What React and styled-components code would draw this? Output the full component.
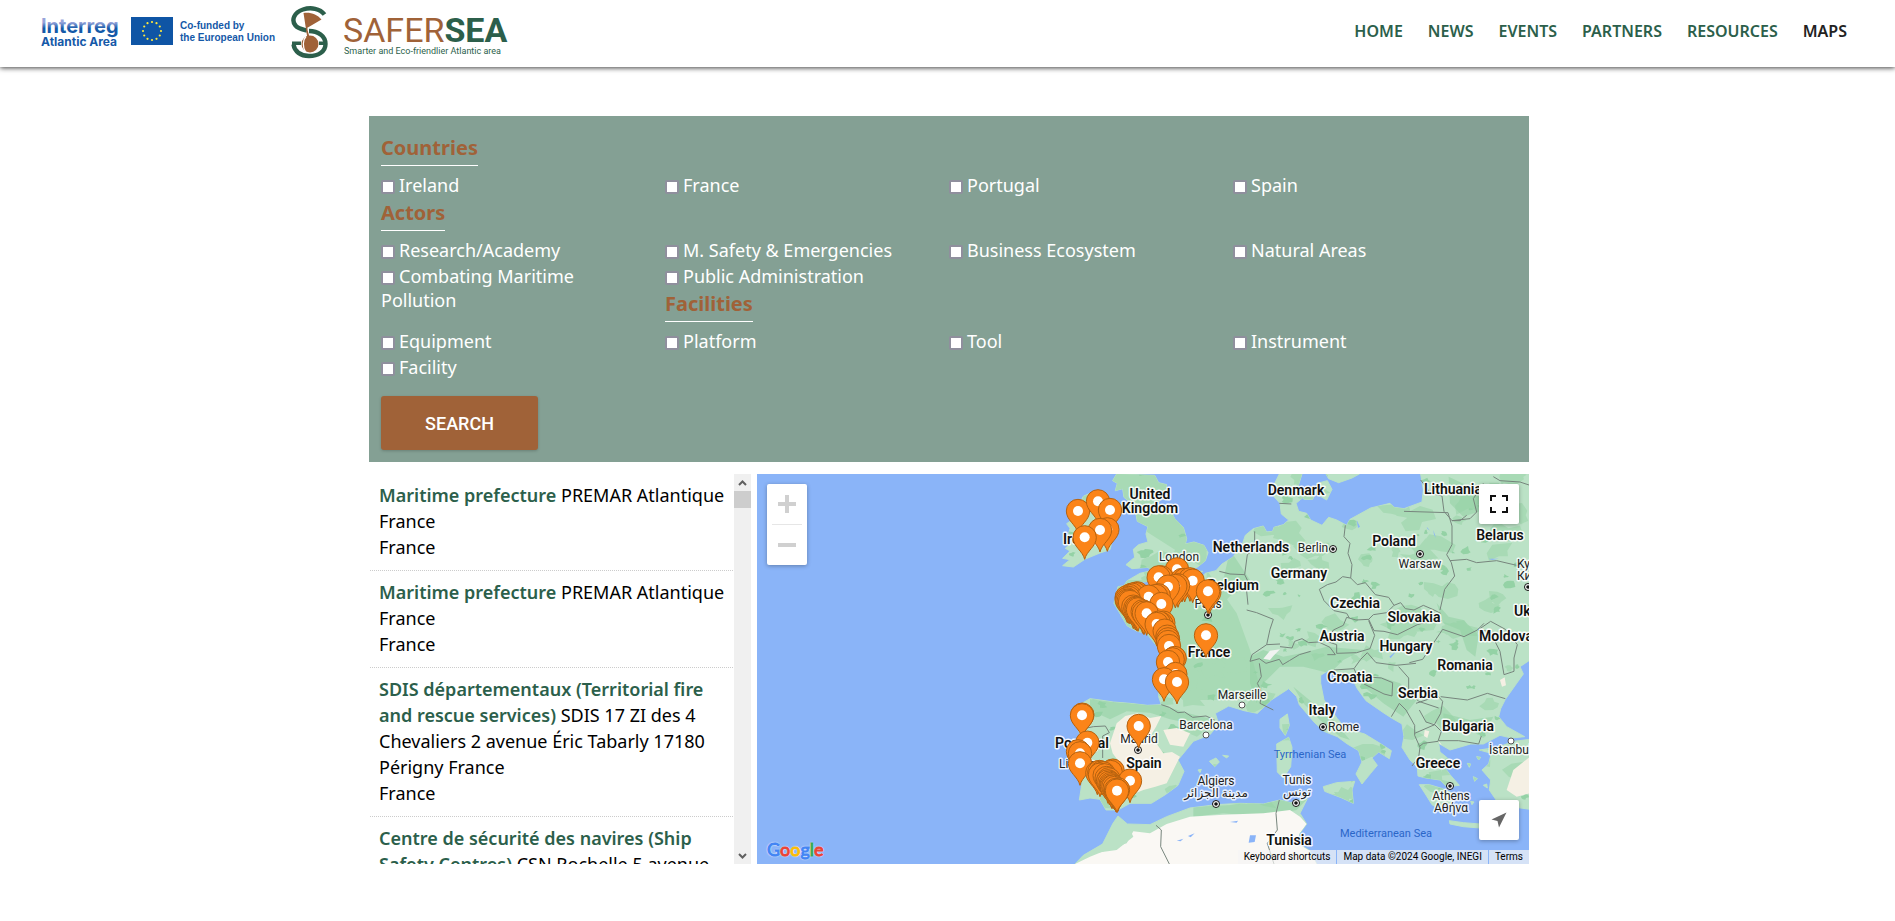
import { useRef, useState } from 'react'
import styled, { createGlobalStyle } from 'styled-components'

const GREEN = '#2c5f4b'
const BROWN = '#a06238'
const SAGE = '#84a094'

const GlobalStyle = createGlobalStyle`
  * {
    box-sizing: border-box;
  }

  body {
    margin: 0;
    background: #fff;
    color: #000;
    font-family: 'Noto Sans', 'Open Sans', sans-serif;
    font-size: 18px;
    line-height: 26px;
  }
`

/* ---------- header ---------- */

const Header = styled.header`
  display: flex;
  align-items: center;
  justify-content: space-between;
  height: 67px;
  padding: 0 48px 0 40px;
  background: #fff;
  box-shadow: 0 1px 5px rgba(0, 0, 0, 0.75);
`

const Brand = styled.a`
  display: flex;
  align-items: center;
  gap: 10px;
  text-decoration: none;

  svg {
    display: block;
  }
`

const Nav = styled.nav`
  display: flex;
  gap: 25px;
  padding-bottom: 6px;
`

const NavLink = styled.a`
  color: ${({ $active }) => ($active ? '#222' : GREEN)};
  font-size: 16px;
  font-weight: 600;
  text-decoration: none;

  &:hover {
    color: #222;
  }
`

const navItems = ['HOME', 'NEWS', 'EVENTS', 'PARTNERS', 'RESOURCES', 'MAPS']

const InterregLogo = () => {
  const stars = [...Array(12)].map((_, i) => {
    const a = (i * Math.PI) / 6
    return [112 + 9 * Math.sin(a), 22 - 9 * Math.cos(a)]
  })

  return (
    <svg width="240" height="50" viewBox="0 0 240 50" role="img" aria-label="Interreg Atlantic Area">
      <defs>
        <linearGradient id="interreg" x1="0" y1="0" x2="0" y2="1">
          <stop offset="0.35" stopColor="#97a4da" />
          <stop offset="0.6" stopColor="#1559a8" />
        </linearGradient>
      </defs>
      <text x="1" y="24" fontFamily="Inter, sans-serif" fontWeight="700" fontSize="20" fill="url(#interreg)">Interreg</text>
      <text x="1" y="37" fontFamily="Inter, sans-serif" fontWeight="700" fontSize="12" fill="#1559a8">Atlantic Area</text>
      <rect x="91" y="8" width="42" height="28" fill="#0f55a5" />
      {stars.map(([x, y]) => <circle key={`${x}-${y}`} cx={x} cy={y} r="1.1" fill="#ffe93b" />)}
      <g fontFamily="'Liberation Sans', Arial, sans-serif" fontWeight="700" fontSize="10" fill="#1559a8">
        <text x="140" y="20">Co-funded by</text>
        <text x="140" y="32">the European Union</text>
      </g>
    </svg>
  )
}

const SaferSeaLogo = () => (
  <svg width="230" height="56" viewBox="0 0 230 56" role="img" aria-label="SAFERSEA">
    <g fill="none" stroke={GREEN} strokeWidth="4.4">
      <path d="M34.5 8.5C30 2.500 21 1 13 3.500C4 6.500 1 14 5.500 19.500C8.500 23 13 23.500 17 24.500" />
      <path d="M19 25C28 25 35.500 30 35.500 38C35.500 46 28 50 19 50C10.500 50 4.500 45.500 3.500 38.500" />
    </g>
    <path d="M2 35.500h9v3.600H2zM29 35.500h8v3.600h-8z" fill={GREEN} />
    <path d="M13.500 7C21 6 27 8.500 31.500 13.500L17 22L20 33L17.500 33z" fill={BROWN} />
    <circle cx="20" cy="38" r="8.500" fill={BROWN} />
    <path d="M16 30.500C12.500 34 12.500 41 15.500 46" fill="none" stroke="#fff" strokeWidth="1.300" />
    <text x="53" y="36" fontFamily="Roboto, sans-serif" fontSize="34" fill={BROWN}>
      SAFER<tspan fontWeight="700" fill={GREEN}>SEA</tspan>
    </text>
    <text x="54" y="48" fontFamily="Roboto, sans-serif" fontSize="9" fill={GREEN}>
      Smarter and Eco-friendlier Atlantic area
    </text>
  </svg>
)

/* ---------- filter panel ---------- */

const Main = styled.main`
  max-width: 1163px;
  margin: 49px auto 0;
  padding-left: 3px;
`

const Filters = styled.form`
  padding: 18px 12px 12px;
  background: ${SAGE};
  color: #fff;
`

const FilterGrid = styled.div`
  display: grid;
  grid-template-columns: repeat(4, 1fr);
`

const HeadingCell = styled.div`
  grid-column: ${({ $column }) => $column || '1 / -1'};
  height: 39px;
`

const Heading = styled.h4`
  display: inline-block;
  margin: 0;
  padding-bottom: 4px;
  border-bottom: 1px solid #fff;
  color: ${BROWN};
  font-size: 20px;
  font-weight: 700;
  line-height: 27px;
`

const Option = styled.label`
  grid-row: span ${({ $rows }) => $rows || 1};
  padding: 0 40px 2px 0;
  line-height: 24px;
`

const Checkbox = styled.input`
  appearance: none;
  width: 14px;
  height: 14px;
  margin: 0 4px 0 0;
  border: 2px solid #8f8f9d;
  border-radius: 2px;
  background: #fff;
  vertical-align: -2px;

  &:checked {
    background: ${BROWN};
  }
`

const SearchButton = styled.button`
  display: block;
  width: 157px;
  height: 54px;
  margin-top: 15px;
  border: 0;
  border-radius: 3px;
  background: ${BROWN};
  box-shadow: 0 1px 3px rgba(0, 0, 0, 0.2);
  color: #fff;
  cursor: pointer;
  font-family: Roboto, sans-serif;
  font-size: 18px;
  font-weight: 500;
`

const filters = [
  { heading: 'Countries' },
  { label: 'Ireland' },
  { label: 'France' },
  { label: 'Portugal' },
  { label: 'Spain' },
  { heading: 'Actors' },
  { label: 'Research/Academy' },
  { label: 'M. Safety & Emergencies' },
  { label: 'Business Ecosystem' },
  { label: 'Natural Areas' },
  { label: 'Combating Maritime Pollution', rows: 2 },
  { label: 'Public Administration' },
  { heading: 'Facilities', column: '2 / -1' },
  { label: 'Equipment' },
  { label: 'Platform' },
  { label: 'Tool' },
  { label: 'Instrument' },
  { label: 'Facility' },
]

/* ---------- results list ---------- */

const Results = styled.section`
  display: grid;
  grid-template-columns: 382px minmax(0, 1fr);
  gap: 6px;
  height: 390px;
  margin-top: 12px;
`

const ListPane = styled.div`
  display: flex;
  min-height: 0;
`

const List = styled.ul`
  flex: 1;
  margin: 0;
  padding: 0 1px;
  overflow-y: auto;
  scrollbar-width: none;
  list-style: none;
`

const Item = styled.li`
  padding: 8px 3px 10px 9px;
  border-bottom: 1px dotted #ccc;
`

const ItemTitle = styled.strong`
  color: ${GREEN};
  font-weight: 600;
`

const Scrollbar = styled.div`
  display: flex;
  flex-direction: column;
  width: 17px;
  background: #f0f0f0;
`

const ScrollArrow = styled.button`
  display: flex;
  align-items: center;
  justify-content: center;
  width: 17px;
  height: 17px;
  padding: 0;
  border: 0;
  background: none;
`

const Track = styled.div`
  flex: 1;
`

const Thumb = styled.div`
  height: 17px;
  background: #cdcdcd;
`

const places = [
  { title: 'Maritime prefecture', text: 'PREMAR Atlantique France', country: 'France' },
  { title: 'Maritime prefecture', text: 'PREMAR Atlantique France', country: 'France' },
  {
    title: 'SDIS départementaux (Territorial fire and rescue services)',
    text: 'SDIS 17 ZI des 4 Chevaliers 2 avenue Éric Tabarly 17180 Périgny France',
    country: 'France',
  },
  {
    title: 'Centre de sécurité des navires (Ship Safety Centres)',
    text: 'CSN Rochelle 5 avenue',
    country: 'France',
  },
]

/* ---------- map ---------- */

const MapPane = styled.div`
  position: relative;
  overflow: hidden;
  background: #8ab4f8;
`

const MapCanvas = styled.svg`
  display: block;
  width: 100%;
  height: 100%;
`

const MapControl = styled.div`
  position: absolute;
  top: ${({ $top }) => $top};
  right: ${({ $right }) => $right};
  bottom: ${({ $bottom }) => $bottom};
  left: ${({ $left }) => $left};
  display: flex;
  flex-direction: column;
  align-items: center;
  width: 40px;
  border-radius: 2px;
  background: #fff;
  box-shadow: 0 1px 4px rgba(0, 0, 0, 0.3);
`

const ControlButton = styled.button`
  display: flex;
  align-items: center;
  justify-content: center;
  width: 40px;
  height: 40px;
  padding: 0;
  border: 0;
  background: none;
  cursor: pointer;
`

const ControlDivider = styled.div`
  width: 30px;
  height: 1px;
  background: #e6e6e6;
`

const GoogleMark = styled.a`
  position: absolute;
  bottom: 4px;
  left: 10px;
  font-family: Lato, sans-serif;
  font-size: 18px;
  line-height: 22px;
  text-decoration: none;
  text-shadow: 0 0 2px #fff, 0 0 2px #fff, 0 0 1px #fff;
`

const Letter = styled.span`
  color: ${({ $color }) => $color};
  -webkit-text-stroke: 1px ${({ $color }) => $color};
`

const Attribution = styled.div`
  position: absolute;
  right: 0;
  bottom: 0;
  display: flex;
  height: 14px;
  background: rgba(245, 245, 245, 0.7);
  font-family: Roboto, sans-serif;
  font-size: 10px;
  line-height: 14px;

  > * {
    padding: 0 6px;
    border: 0;
    background: none;
    color: #000;
    font: inherit;
    text-decoration: none;
    white-space: nowrap;
  }

  > * + * {
    border-left: 1px solid #8ab4f8;
  }
`

const googleLetters = [
  ['G', '#4285f4'], ['o', '#ea4335'], ['o', '#fbbc05'], ['g', '#4285f4'], ['l', '#34a853'], ['e', '#ea4335'],
]

// Terrain is drawn on a grid three times finer than the labels.
const land = [
  // Great Britain
  'M200 12l-12 20 14 8-6 22 22-6 4 26 20 16-24 10 12 16 28 8 4 22 32 16-6 22 6 24-28 8-16 14 4 24-26 22 18 12 48-4 10 10-34 8-38 22-14 20 10 4 26-20 30 0 24-8 36-2 52-4 44-4 18-14-36-2 22-12 22-18 8-24-12-22-30-10-26 6 4-16-10-34-26-26-20-38-32-6 24-34 4-24-24-6-12-22z',
  // Ireland
  'M60 175l-10-14 12-8 20-40 18-34 30-14 38 18 34 28-6 40-6 48-10 40-30 10-44 18-36 24-32-4 22-18-22-4 22-22-14-8 28-26-20-10z',
  // Mainland
  'M688 12L670 48 672 80 690 100 694 132 716 150 700 164 672 172 668 184 650 186 640 168 610 176 586 196 576 226 548 262 516 282 498 302 466 310 440 340 414 356 380 368 392 398 372 406 360 386 300 384 262 340 204 350 192 400 232 468 262 484 290 490 328 538 332 600 326 680 334 704 292 706 240 700 190 696 150 690 120 686 86 706 74 744 92 800 84 860 60 880 76 908 96 940 88 990 120 984 150 988 168 1020 204 1020 240 1000 304 1000 346 974 384 946 402 904 384 870 430 814 480 794 506 762 496 730 536 708 582 722 622 730 664 690 716 656 740 680 748 704 792 756 822 784 862 800 892 822 926 842 936 876 918 912 936 942 962 910 982 886 966 864 986 846 1018 866 1024 842 990 820 944 792 888 776 862 746 822 690 812 640 812 616 834 602 852 600 870 618 882 636 908 628 922 656 948 692 1000 728 1028 746 1056 762 1062 800 1056 832 1080 870 1102 892 1104 918 1128 924 1170 930 1190 950 1228 946 1200 914 1182 890 1220 892 1190 862 1170 846 1166 820 1200 840 1262 822 1300 822 1350 796 1384 804 1424 800 1370 770 1346 740 1352 716 1366 688 1400 640 1420 612 1410 590 1440 570V12H1112L1120 60 1116 96 1062 116 1032 112 1020 100 962 114 900 148 890 166 860 150 836 142 816 166 782 150 770 130 746 124 738 100 764 78 742 56 756 12z',
  // Peloponnese
  'M1108 944l30 0 40 12 26 12 0 44-20-14-14 20-24-14-20-32z',
  // Danish islands and southern Sweden
  'M752 60l24-8 22 12-10 24-26 0zM802 40l30-8 14 26-16 32-24-14zM828 12h100l-22 12-40 14-30-12z',
  // Sicily, Sardinia, Corsica
  'M820 950l40-12 54-4-8 26 4 40-34-16-52-20zM680 822l36-20 10 30-4 58-22 34-18-18zM690 748l22-16 6 34-12 30-16-22z',
  // Balearics and Crete
  'M478 874l20-10 10 12-14 14zM518 856l18 2-6 6zM444 900l10-2-4 10zM1198 1052l42 6 50 4 0 12-50-4-40-8z',
  // Anatolia
  'M1440 808l-48 6-50 18-54 8 36 10-8 32-20 18 26 30-4 30 30 44 50 8 42 6z',
  // Aegean islands
  'M1252 880l10 2-4 10zM1270 920l12 6-8 8zM1240 970l10 4-8 8zM1262 994l10 2-6 8zM1300 946l10-4 2 12zM1280 860l12 2-6 8z',
  // North Africa
  'M75 1182L100 1156 158 1122 188 1062 204 1038 232 1062 300 1064 350 1040 420 1014 500 1004 570 1000 640 1002 690 990 722 998 772 986 750 1030 770 1062 748 1092 742 1120 780 1142 800 1182z',
].join('')

const deepForest = [
  'M120 688L190 696 240 700 334 704 400 726 480 746 440 764 360 748 300 728 230 724 180 748 120 720z',
  'M600 560L640 540 700 560 760 548 830 530 940 540 880 570 840 610 760 590 690 590 640 640 620 700 600 640z',
  'M1160 400L1196 440 1240 450 1286 496 1276 560 1250 540 1230 480 1180 460z',
  'M730 650L790 700 850 750 900 810 870 800 810 750 760 700z',
  'M930 640L1000 700 1060 740 1100 690 1050 640 990 620z',
  'M1180 730L1260 750 1330 740 1320 760 1240 780 1180 770z',
  'M540 240L600 330 560 370 520 330z',
  'M1196 20L1280 60 1300 120 1240 140 1200 100z',
  'M430 1010L560 1004 690 990 772 986 740 1020 640 1040 520 1030 430 1040z',
]

const dryLand = [
  'M200 760L226 738 262 730 300 744 334 738 318 770 300 800 322 824 340 850 366 846 390 860 370 900 350 940 316 950 280 960 230 980 204 964 170 940 196 912 210 880 188 850 180 820z',
  'M340 780L380 774 420 790 400 830 360 824z',
  'M1440 860L1390 900 1370 960 1400 980 1440 970z',
  'M1350 630l14-8 4 24-12 4zM1166 812l14 20 6 18-14-10zM1124 780l14 4-6 20-10-6z',
]

const africaSand = 'M75 1182L120 1160 170 1140 230 1120 250 1084 300 1090 350 1062 420 1040 520 1034 640 1030 720 1020 750 1040 770 1062 748 1092 742 1120 780 1142 800 1182z'

const borders = [
  'M886 166l-4 34 18 20-6 30 12 34-4 40',
  'M902 324l-24-4-20 16-26 8-24 14 14 34 30 30 38 8 8 14',
  'M902 324l20 20 24-6 30 36 40 8 16 24 20-8 14 18 26 4 28-14 28 12 24 12',
  'M1062 124l132 4 12 40 0 56-16 30 14 24 10 40-30 40-14 62',
  'M890 442l28 8 38-2 14-14 40-6 22-22',
  'M956 448l16 34 30 2 40 10 60-30 48-14 24 2',
  'M890 442l-10 24-30 14-20 34 30 10 0 26 60-2 40-12 14-40-18-44',
  'M690 530l36 4 8-20 22-8 20 12 30-2 34 16 16 22-24 0',
  'M590 420l30 8 50 20-10 30-10 46 40-2',
  'M508 304l32 8 44 2 10 20-4 30 4 40',
  'M584 314l8-60 22-18 0-52',
  'M650 524l-44 30-6 20 28-8 20 14 40-12 10 16 20-12 30-18 34-10',
  'M628 580l6 40-12 20 14 30-6 30 40 20',
  'M334 704l24 8 26 16 20-2 24 16 40-4 26 12',
  'M100 776l30-6 36-2 12 20-20 10 0 66',
  'M852 600l60-4 20-28 20-20 26 30 60 8 60-6',
  'M912 596l10 22 72 6 34 14-2 40-24-6-60-30',
  'M1078 578l40-10 60-90',
  'M1046 590l30 34 0 40 30 30 60 20',
  'M1098 700l66-22 14 16-6 36-20 36',
  'M1178 478l64 22 40-20 20-20',
  'M1172 680l80 10 60-20 54 16',
  'M1284 480l38-26 44 24 36 46-10 40 0 40-30 10-12-70-30-60z',
  'M1200 272l50-4 30 10 60-6 60 14 20 6',
  'M1112 30l30 40 34 8 6 46 24 28 54-6 20-20-10-40 30-46',
  'M1206 152l24 0 20-16M1330 20l20 12 60 4 30 10',
  'M1024 740l24-40 20 20 26 46 0 30 16 36-4 30-20 26',
  'M1094 790l60-26 20 20-10 30-44 6-10 8',
  'M1166 812l60 0 60 10 8-24',
  'M318 1066l16 14-2 50 26 52M688 990l-10 40 4 50-30 40 20 62',
  'M688 100l36 2M1152 764l-24-8-20-36',
]

const lakes = [
  'M540 1056l24-4-4 6zM600 1096l18 0-4 20-18 2zM380 1112l20-6-8 8zM414 1098l20-8-12 12z',
  'M920 150l10 20-6 4zM1150 180l8 24-6-10zM1130 170l10 12-8-6z',
  'M1316 266l30 0-20 4zM1018 560l24-20-20 24z',
]

// countries: [text, x, y, anchor]
const countries = [
  ['United', 393, 25], ['Kingdom', 393, 39], ['Denmark', 539, 21], ['Lithuania', 667, 20, 'start'],
  ['Netherlands', 494, 78], ['Poland', 637, 72], ['Belarus', 743, 66], ['Ireland', 306, 70, 'start'],
  ['Belgium', 502, 116, 'end'], ['Germany', 542, 104], ['Czechia', 598, 134], ['Slovakia', 657, 148],
  ['Ukraine', 757, 142, 'start'], ['Austria', 585, 167], ['Hungary', 649, 177], ['Moldova', 722, 167, 'start'],
  ['Romania', 708, 196], ['Croatia', 593, 208], ['Serbia', 661, 224], ['Italy', 565, 241],
  ['Bulgaria', 711, 257], ['France', 452, 183], ['Portugal', 325, 274], ['Spain', 387, 294],
  ['Greece', 681, 294], ['Tunisia', 532, 371],
]

const cities = [
  ['London', 422, 87], ['Berlin', 556, 78], ['Warsaw', 663, 94], ['Kyiv', 760, 94, 'start'],
  ['Київ', 760, 106, 'start'], ['Paris', 451, 134], ['Marseille', 485, 225], ['Barcelona', 449, 255],
  ['Madrid', 382, 269], ['Lisbon', 302, 294, 'start'], ['Rome', 571, 257, 'start'], ['Algiers', 459, 311],
  ['مدينة الجزائر', 459, 323], ['Tunis', 540, 310], ['تونس', 540, 322], ['Athens', 694, 326],
  ['Αθήνα', 694, 338], ['İstanbul', 732, 280, 'start'],
]

const seas = [['Tyrrhenian Sea', 553, 284], ['Mediterranean Sea', 629, 363]]

const capitals = [
  [576, 75], [663, 80], [451, 141], [381, 276], [566, 253], [459, 330], [539, 329], [693, 312], [771, 113],
]

const towns = [[485, 231], [449, 261], [754, 267]]

const pins = [
  [84, 123], [144, 94], [180, 120], [172, 178], [150, 180], [104, 202],
  [381, 298], [334, 322], [326, 322], [396, 330], [404, 330], [420, 328], [428, 332],
  [384, 346], [376, 348], [354, 350], [478, 366], [474, 364],
  [262, 370], [256, 372], [246, 374], [238, 378], [326, 376], [318, 378], [296, 380],
  [230, 382], [236, 384], [230, 388], [232, 392], [236, 394], [240, 396], [334, 402],
  [250, 410], [256, 414], [260, 416], [264, 418], [278, 424], [282, 428], [290, 430],
  [340, 458], [334, 462], [326, 458], [320, 462], [344, 482], [352, 500], [354, 508], [354, 516], [357, 528],
  [374, 564], [368, 568], [354, 576], [376, 612], [342, 628], [381, 636],
  [468, 496], [97, 734], [96, 736], [266, 768], [112, 818], [84, 844], [90, 850], [90, 880],
  [188, 902], [182, 906], [142, 908], [148, 906], [154, 908], [160, 910], [150, 914], [164, 916],
  [240, 932], [170, 924], [176, 928], [174, 934], [178, 938], [182, 942], [184, 946], [186, 950],
  [190, 950], [194, 954], [204, 958], [198, 960], [201, 962],
]

const PIN = 'M0 66C-6 40-35 28-35 0A35 35 0 1 1 35 0C35 28 6 40 0 66z'

// Small irregular patches of woodland, seeded so they never move between renders.
const patches = (count, seed, size) => {
  let s = seed
  const rand = () => {
    s = (s * 16807) % 2147483647
    return s / 2147483647
  }

  return [...Array(count)].map(() => {
    const cx = 40 + rand() * 1400
    const cy = rand() * 1000
    const r = size * (0.4 + rand())
    const points = [...Array(9)].map((_, i) => {
      const a = (i / 9) * Math.PI * 2
      const d = r * (0.35 + rand())
      return `${Math.round(cx + Math.cos(a) * d * 1.5)} ${Math.round(cy + Math.sin(a) * d)}`
    })
    return `M${points.join('L')}z`
  }).join('')
}

const midPatches = patches(120, 77, 26)
const darkPatches = patches(190, 4021, 9)

const EuropeMap = () => (
  <MapCanvas viewBox="0 0 772 390" preserveAspectRatio="xMidYMid slice" role="img" aria-label="Map of Europe">
    <defs>
      <clipPath id="land"><path d={land} /></clipPath>
      <g id="capital">
        <circle r="3.500" fill="#fff" stroke="#111" strokeWidth="1" />
        <circle r="1.800" fill="#111" />
      </g>
    </defs>

    <g transform="translate(293 -4) scale(0.33333)">
      <path d={land} fill="#bbe2c6" stroke="#bbe2c6" strokeWidth="3" strokeLinejoin="round" />
      <g clipPath="url(#land)">
        <path d="M0 0H470V330H200L180 500 400 690H640L600 540 560 430 470 300z" fill="#a8dab5" />
        <path d={midPatches} fill="#a8dab5" />
        <path d={deepForest.join('')} fill="#94d2a5" opacity="0.6" />
        <path d={darkPatches} fill="#94d2a5" />
        <path d={dryLand.join('')} fill="#f5f0e4" />
        <path d={africaSand} fill="#faf8f4" />
        <path d="M70 1182L130 1150 200 1140 250 1100 232 1062 190 1050 100 1156z" fill="#bbe2c6" />
        <path d="M640 566l20-24 30-4-20 20-10 12z" fill="#f1f3f1" />
      </g>
      <path d={lakes.join('')} fill="#8ab4f8" />
      <path d={borders.join('')} fill="none" stroke="#76857c" strokeWidth="3" strokeLinejoin="round" />
    </g>

    <g fontFamily="Roboto, 'Noto Sans', 'DejaVu Sans', sans-serif" textAnchor="middle" strokeLinejoin="round" paintOrder="stroke">
      <g fontSize="11" fill="#2a66c8">
        {seas.map(([name, x, y]) => <text key={name} x={x} y={y}>{name}</text>)}
      </g>
      <g fontSize="12" fill="#222" stroke="#fff" strokeOpacity="0.8" strokeWidth="3">
        {cities.map(([name, x, y, anchor]) => <text key={name} x={x} y={y} textAnchor={anchor}>{name}</text>)}
      </g>
      <g fontSize="14" fontWeight="600" fill="#111" stroke="#fff" strokeOpacity="0.9" strokeWidth="3">
        {countries.map(([name, x, y, anchor]) => <text key={name} x={x} y={y} textAnchor={anchor}>{name}</text>)}
      </g>
    </g>

    {capitals.map(([x, y]) => <use key={`${x}-${y}`} href="#capital" x={x} y={y} />)}
    {towns.map(([x, y]) => <circle key={`${x}-${y}`} cx={x} cy={y} r="3" fill="#fff" stroke="#555" />)}

    <g transform="translate(293 -4) scale(0.33333)">
      {pins.map(([x, y]) => (
        <g key={`${x}-${y}`} transform={`translate(${x} ${y})`}>
          <path d={PIN} fill="#fb8419" stroke="#b4610f" strokeWidth="3" />
          <circle r="15" fill="#fff" />
        </g>
      ))}
    </g>
  </MapCanvas>
)

export default function App() {
  const listRef = useRef(null)
  const [selected, setSelected] = useState([])

  const toggle = label => {
    setSelected(selected.includes(label) ? selected.filter(l => l !== label) : [...selected, label])
  }

  const scrollList = top => {
    listRef.current?.scrollBy({ top })
  }

  return (
    <>
      <GlobalStyle />
      <Header>
        <Brand href="#home">
          <InterregLogo />
          <SaferSeaLogo />
        </Brand>
        <Nav>
          {navItems.map(item => (
            <NavLink key={item} href={`#${item.toLowerCase()}`} $active={item === 'MAPS'}>{item}</NavLink>
          ))}
        </Nav>
      </Header>

      <Main>
        <Filters onSubmit={e => e.preventDefault()}>
          <FilterGrid>
            {filters.map(({ heading, label, column, rows }) => (heading ? (
              <HeadingCell key={heading} $column={column}><Heading>{heading}</Heading></HeadingCell>
            ) : (
              <Option key={label} $rows={rows}>
                <Checkbox type="checkbox" checked={selected.includes(label)} onChange={() => toggle(label)} />
                {label}
              </Option>
            )))}
          </FilterGrid>
          <SearchButton type="submit">SEARCH</SearchButton>
        </Filters>

        <Results>
          <ListPane>
            <List ref={listRef}>
              {places.map(({ title, text, country }, i) => (
                <Item key={i}>
                  <ItemTitle>{title}</ItemTitle> {text}<br />
                  {country}
                </Item>
              ))}
            </List>
            <Scrollbar>
              <ScrollArrow type="button" aria-label="Scroll up" onClick={() => scrollList(-60)}>
                <svg width="9" height="6" viewBox="0 0 9 6"><path d="M1 5l3.500-3.500L8 5" fill="none" stroke="#606060" strokeWidth="2" /></svg>
              </ScrollArrow>
              <Track><Thumb /></Track>
              <ScrollArrow type="button" aria-label="Scroll down" onClick={() => scrollList(60)}>
                <svg width="9" height="6" viewBox="0 0 9 6"><path d="M1 1l3.500 3.500L8 1" fill="none" stroke="#606060" strokeWidth="2" /></svg>
              </ScrollArrow>
            </Scrollbar>
          </ListPane>

          <MapPane>
            <EuropeMap />
            <MapControl $top="10px" $left="10px">
              <ControlButton type="button" aria-label="Zoom in">
                <svg width="18" height="18"><path d="M7 0h4v7h7v4h-7v7H7v-7H0V7h7z" fill="#d0d0d0" /></svg>
              </ControlButton>
              <ControlDivider />
              <ControlButton type="button" aria-label="Zoom out">
                <svg width="18" height="18"><path d="M0 7h18v4H0z" fill="#d0d0d0" /></svg>
              </ControlButton>
            </MapControl>
            <MapControl $top="10px" $right="10px">
              <ControlButton type="button" aria-label="Toggle fullscreen">
                <svg width="18" height="18"><path d="M1 6V1h5M12 1h5v5M17 12v5h-5M6 17H1v-5" fill="none" stroke="#111" strokeWidth="2" /></svg>
              </ControlButton>
            </MapControl>
            <MapControl $bottom="24px" $right="10px">
              <ControlButton type="button" aria-label="Show my location">
                <svg width="16" height="16" viewBox="0 0 16 16"><path d="M15.500 0.500L0.500 7.500L6.500 9L8 15.500z" fill="#666" /></svg>
              </ControlButton>
            </MapControl>
            <GoogleMark href="#google" aria-label="Google">
              {googleLetters.map(([char, color], i) => <Letter key={i} $color={color}>{char}</Letter>)}
            </GoogleMark>
            <Attribution>
              <button type="button">Keyboard shortcuts</button>
              <span>Map data ©2024 Google, INEGI</span>
              <a href="#terms">Terms</a>
            </Attribution>
          </MapPane>
        </Results>
      </Main>
    </>
  )
}
